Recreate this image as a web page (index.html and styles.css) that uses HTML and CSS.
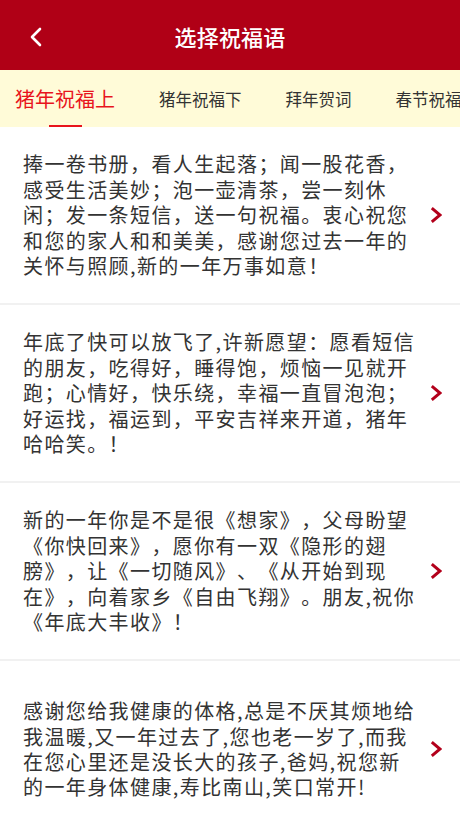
FILE: index.html
```html
<!DOCTYPE html>
<html lang="zh-CN">
<head>
<meta charset="utf-8">
<title>选择祝福语</title>
<link rel="stylesheet" href="styles.css">
</head>
<body>
<div class="app">
  <header class="topbar">
    <span class="back">
      <svg width="14" height="20" viewBox="0 0 14 20"><polyline points="11,2 3,10 11,18" fill="none" stroke="#fff" stroke-width="2.6" stroke-linecap="round" stroke-linejoin="round"/></svg>
    </span>
    <h1 class="title">选择祝福语</h1>
  </header>
  <nav class="tabs">
    <span class="tab active">猪年祝福上</span>
    <span class="tab">猪年祝福下</span>
    <span class="tab">拜年贺词</span>
    <span class="tab">春节祝福语</span>
  </nav>
  <main class="list">
    <div class="item">
      <p class="text">捧一卷书册，看人生起落；闻一股花香，感受生活美妙；泡一壶清茶，尝一刻休闲；发一条短信，送一句祝福。衷心祝您和您的家人和和美美，感谢您过去一年的关怀与照顾,新的一年万事如意！</p>
      <svg class="arrow" width="12" height="16" viewBox="0 0 12 16"><polyline points="1.8,1.2 10,8 1.8,14.8" fill="none" stroke="#b3001b" stroke-width="3"/></svg>
    </div>
    <div class="item">
      <p class="text">年底了快可以放飞了,许新愿望：愿看短信的朋友，吃得好，睡得饱，烦恼一见就开跑；心情好，快乐绕，幸福一直冒泡泡；好运找，福运到，平安吉祥来开道，猪年哈哈笑。！</p>
      <svg class="arrow" width="12" height="16" viewBox="0 0 12 16"><polyline points="1.8,1.2 10,8 1.8,14.8" fill="none" stroke="#b3001b" stroke-width="3"/></svg>
    </div>
    <div class="item">
      <p class="text">新的一年你是不是很《想家》，父母盼望《你快回来》，愿你有一双《隐形的翅膀》，让《一切随风》、《从开始到现在》，向着家乡《自由飞翔》。朋友,祝你《年底大丰收》！</p>
      <svg class="arrow" width="12" height="16" viewBox="0 0 12 16"><polyline points="1.8,1.2 10,8 1.8,14.8" fill="none" stroke="#b3001b" stroke-width="3"/></svg>
    </div>
    <div class="item">
      <p class="text">感谢您给我健康的体格,总是不厌其烦地给我温暖,又一年过去了,您也老一岁了,而我在您心里还是没长大的孩子,爸妈,祝您新的一年身体健康,寿比南山,笑口常开!</p>
      <svg class="arrow" width="12" height="16" viewBox="0 0 12 16"><polyline points="1.8,1.2 10,8 1.8,14.8" fill="none" stroke="#b3001b" stroke-width="3"/></svg>
    </div>
  </main>
</div>
</body>
</html>
```
FILE: styles.css
```css
* { box-sizing: border-box; }
html, body {
  margin: 0;
  padding: 0;
  background: #ffffff;
}
body {
  font-family: "Noto Sans CJK SC", "Noto Sans", sans-serif;
  color: #333333;
  overflow: hidden;
}
.app {
  width: 460px;
  height: 818px;
  overflow: hidden;
}
.topbar {
  height: 70px;
  background: #b00016;
  display: flex;
  align-items: center;
  justify-content: center;
  position: relative;
}
.back {
  position: absolute;
  left: 29px;
  top: 27px;
  display: flex;
}
.title {
  margin: 0;
  color: #ffffff;
  font-size: 22px;
  font-weight: 500;
  letter-spacing: 0.2px;
  line-height: 1;
  padding-top: 2px;
}
.tabs {
  height: 57px;
  background: #fffbd8;
  display: flex;
  align-items: center;
  gap: 44px;
  padding-left: 15px;
  white-space: nowrap;
  overflow: hidden;
}
.tab {
  position: relative;
  height: 57px;
  display: flex;
  align-items: center;
  font-size: 16.5px;
  color: #333333;
  flex: none;
}
.tab.active {
  font-size: 20px;
  color: #e8141c;
}
.tab.active::after {
  content: "";
  position: absolute;
  bottom: 0;
  left: 50%;
  width: 33px;
  height: 2.5px;
  margin-left: -16px;
  background: #e8141c;
}
.list {
  display: flex;
  flex-direction: column;
}
.item {
  min-height: 176px;
  border-bottom: 2px solid #f1f1f1;
  box-sizing: content-box;
  display: flex;
  align-items: center;
  padding: 0 18px 0 23px;
  gap: 9px;
}
.text {
  margin: 0;
  width: 398px;
  flex: none;
  font-size: 20px;
  letter-spacing: 1.4px;
  line-height: 25.4px;
  color: #333333;
  text-spacing-trim: space-all;
}
.arrow {
  flex: none;
  display: block;
}
```
